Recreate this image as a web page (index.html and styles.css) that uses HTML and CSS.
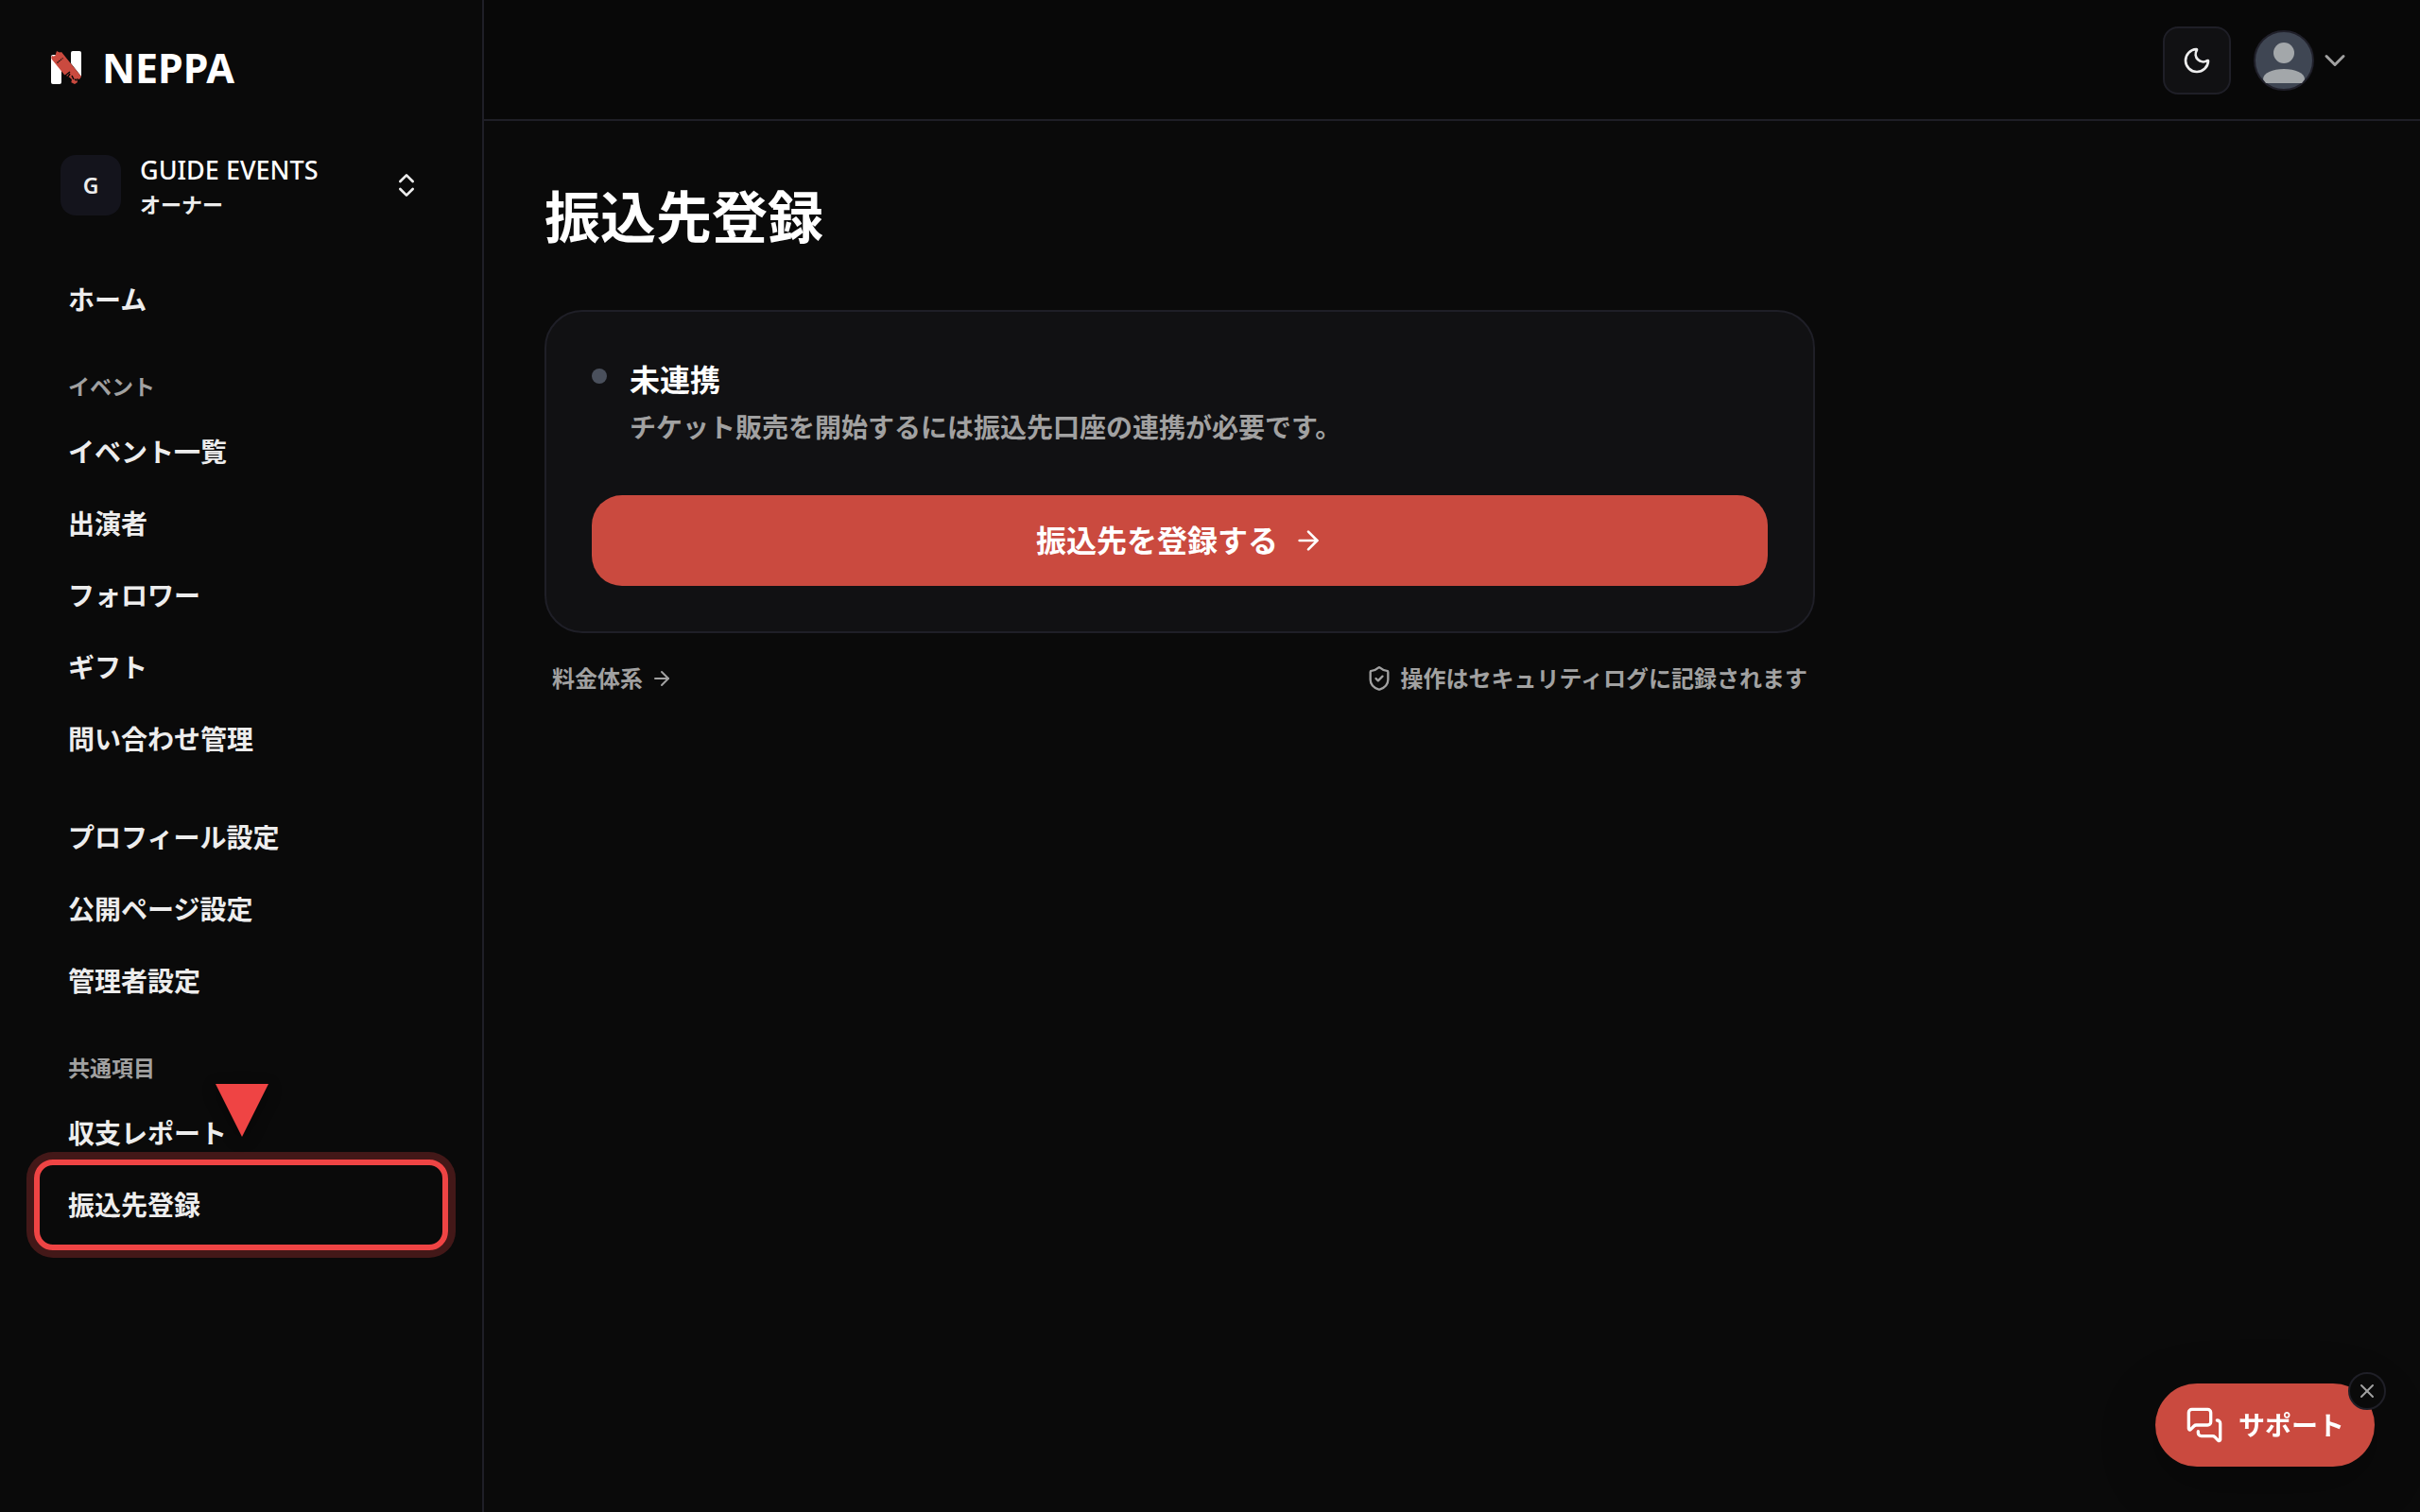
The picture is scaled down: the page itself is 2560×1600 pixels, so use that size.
FILE: index.html
```html
<!DOCTYPE html>
<html lang="ja">
<head>
<meta charset="utf-8">
<meta name="viewport" content="width=device-width, initial-scale=1">
<title>振込先登録 | NEPPA</title>
<link rel="stylesheet" href="styles.css">
</head>
<body>
<div class="app">
  <aside class="sidebar">
    <a class="brand" href="#">
      <svg class="brand-mark" viewBox="0 0 32 36" aria-hidden="true">
        <rect x="0" y="4" width="11" height="31" rx="2" fill="#fff"/>
        <path d="M21 2a2 2 0 0 1 2-2h7a2 2 0 0 1 2 2v25L21 13z" fill="#fff"/>
        <path d="M1 5c2 1 4 0 4-2l1-3c2 1 3 2 5 1l21 26-2 3-3-1 1 4-3 2-4-2 1-3-4-3-4-2L1 9C0 8 0 6 1 5z" fill="#ca4a3f"/>
        <path d="M6.500 12.500l6-5" stroke="#0a0a0a" stroke-width="1.200" stroke-dasharray="1.500 .8"/>
        <path d="M15 26l5-4M16 30l4-6M14 33l3-3M19 28l2 4M20 34l1-2M22 26l2 4M25 30l2 1M18 34l1 1" stroke="#0a0a0a" stroke-width="1.500" fill="none"/>
      </svg>
      <span class="brand-name">NEPPA</span>
    </a>

    <button class="switcher" type="button">
      <span class="switcher-badge">G</span>
      <span class="switcher-text">
        <span class="switcher-name">GUIDE EVENTS</span>
        <span class="switcher-role">オーナー</span>
      </span>
      <svg class="icon icon-32" viewBox="0 0 24 24" aria-hidden="true"><path d="m7 15 5 5 5-5"/><path d="m7 9 5-5 5 5"/></svg>
    </button>

    <nav class="nav">
      <ul class="nav-list">
        <li><a class="nav-link" href="#">ホーム</a></li>
      </ul>
      <h2 class="nav-label">イベント</h2>
      <ul class="nav-list">
        <li><a class="nav-link" href="#">イベント一覧</a></li>
        <li><a class="nav-link" href="#">出演者</a></li>
        <li><a class="nav-link" href="#">フォロワー</a></li>
        <li><a class="nav-link" href="#">ギフト</a></li>
        <li><a class="nav-link" href="#">問い合わせ管理</a></li>
      </ul>
      <ul class="nav-list nav-list-spaced">
        <li><a class="nav-link" href="#">プロフィール設定</a></li>
        <li><a class="nav-link" href="#">公開ページ設定</a></li>
        <li><a class="nav-link" href="#">管理者設定</a></li>
      </ul>
      <h2 class="nav-label">共通項目</h2>
      <ul class="nav-list">
        <li><a class="nav-link" href="#">収支レポート</a></li>
        <li class="guided">
          <a class="nav-link" href="#">振込先登録</a>
          <span class="guide-ring"></span>
          <svg class="guide-arrow" viewBox="0 0 56 56" aria-hidden="true"><path d="M0 0h56L28 56z" fill="#ef4444"/></svg>
        </li>
      </ul>
    </nav>
  </aside>

  <div class="main">
    <header class="topbar">
      <button class="theme-toggle" type="button" aria-label="テーマ切替">
        <svg class="icon icon-32" viewBox="0 0 24 24" aria-hidden="true"><path d="M20.985 12.486a9 9 0 1 1-9.473-9.472c.405-.022.617.46.402.803a6 6 0 0 0 8.268 8.268c.344-.215.825-.004.803.401"/></svg>
      </button>
      <button class="account" type="button" aria-label="アカウント">
        <svg class="avatar" viewBox="0 0 64 64" aria-hidden="true">
          <circle cx="32" cy="32" r="31" fill="#3f4653" stroke="#20202a" stroke-width="2"/>
          <circle cx="32" cy="24" r="11" fill="#a3a7aa"/>
          <path d="M10 52c0-7 10-11 22-11s22 4 22 11l-3 4H13z" fill="#a3a7aa"/>
        </svg>
        <svg class="icon icon-36 muted" viewBox="0 0 24 24" aria-hidden="true"><path d="m6 9 6 6 6-6"/></svg>
      </button>
    </header>

    <main class="content">
      <h1 class="page-title">振込先登録</h1>
      <section class="card">
        <div class="status">
          <span class="status-dot"></span>
          <div>
            <h2 class="status-title">未連携</h2>
            <p class="status-text">チケット販売を開始するには振込先口座の連携が必要です。</p>
          </div>
        </div>
        <button class="primary" type="button">
          振込先を登録する
          <svg class="icon icon-32" viewBox="0 0 24 24" aria-hidden="true"><path d="M5 12h14"/><path d="m12 5 7 7-7 7"/></svg>
        </button>
      </section>
      <div class="card-notes">
        <a class="note" href="#">
          料金体系
          <svg class="icon icon-24" viewBox="0 0 24 24" aria-hidden="true"><path d="M5 12h14"/><path d="m12 5 7 7-7 7"/></svg>
        </a>
        <p class="note">
          <svg class="icon icon-28" viewBox="0 0 24 24" aria-hidden="true"><path d="M20 13c0 5-3.500 7.500-7.660 8.950a1 1 0 0 1-.67-.01C7.500 20.500 4 18 4 13V6a1 1 0 0 1 1-1c2 0 4.500-1.200 6.240-2.720a1.170 1.170 0 0 1 1.520 0C14.510 3.810 17 5 19 5a1 1 0 0 1 1 1z"/><path d="m9 12 2 2 4-4"/></svg>
          操作はセキュリティログに記録されます
        </p>
      </div>
    </main>
  </div>
</div>

<div class="support">
  <button class="support-open" type="button">
    <svg class="icon icon-40" viewBox="0 0 24 24" aria-hidden="true"><path d="M16 10a2 2 0 0 1-2 2H6.828a2 2 0 0 0-1.414.586l-2.202 2.202A.71.71 0 0 1 2 14.286V4a2 2 0 0 1 2-2h10a2 2 0 0 1 2 2z"/><path d="M20 9a2 2 0 0 1 2 2v10.286a.71.71 0 0 1-1.212.502l-2.202-2.202A2 2 0 0 0 17.172 19H10a2 2 0 0 1-2-2v-1"/></svg>
    サポート
  </button>
  <button class="support-close" type="button" aria-label="閉じる">
    <svg class="icon icon-24" viewBox="0 0 24 24" aria-hidden="true"><path d="M18 6 6 18"/><path d="m6 6 12 12"/></svg>
  </button>
</div>
</body>
</html>
```
FILE: styles.css
```css
:root {
  --bg: #0a0a0a;
  --bg-deep: #080808;
  --surface: #111113;
  --line: #1f1f27;
  --text: #ededed;
  --muted: #a1a1a1;
  --accent: #ca4a3f;
  --guide: #ef4444;
}

* { box-sizing: border-box; }

body {
  margin: 0;
  background: var(--bg);
  color: var(--text);
  font-family: "Noto Sans", "Noto Sans CJK JP", sans-serif;
  font-size: 28px;
  line-height: 40px;
}

h1, h2, p, ul { margin: 0; padding: 0; }
ul { list-style: none; }
a { color: inherit; text-decoration: none; }
button {
  padding: 0;
  border: 0;
  background: none;
  color: inherit;
  font: inherit;
  text-align: left;
  cursor: pointer;
}

.icon {
  flex: none;
  fill: none;
  stroke: currentColor;
  stroke-width: 2;
  stroke-linecap: round;
  stroke-linejoin: round;
}
.icon-24 { width: 24px; height: 24px; }
.icon-28 { width: 28px; height: 28px; }
.icon-32 { width: 32px; height: 32px; }
.icon-36 { width: 36px; height: 36px; }
.icon-40 { width: 40px; height: 40px; }
.muted { color: var(--muted); }

.app {
  display: flex;
  min-height: 100vh;
}

/* Sidebar */
.sidebar {
  flex: none;
  width: 512px;
  padding: 40px 48px;
  border-right: 2px solid var(--line);
}
.brand {
  display: flex;
  align-items: center;
  gap: 22px;
  height: 64px;
  padding-left: 6px;
}
.brand-mark { width: 32px; height: 36px; }
.brand-name {
  color: #fff;
  font-size: 43px;
  font-weight: 700;
}
.switcher {
  display: flex;
  align-items: center;
  gap: 20px;
  width: 100%;
  margin-top: 56px;
  padding: 0 16px;
}
.switcher-badge {
  display: grid;
  place-items: center;
  width: 64px;
  height: 64px;
  border-radius: 16px;
  background: #14141c;
  font-size: 23px;
  font-weight: 600;
}
.switcher-text { flex: 1; }
.switcher-name,
.switcher-role { display: block; }
.switcher-name {
  color: #fff;
  font-size: 27px;
  font-weight: 500;
  line-height: 40px;
}
.switcher-role {
  font-size: 22px;
  font-weight: 600;
  line-height: 32px;
}

.nav { margin-top: 49px; }
.nav-list { display: grid; gap: 4px; }
.nav-list-spaced { margin-top: 32px; }
.nav-link {
  display: flex;
  align-items: center;
  height: 72px;
  padding: 0 24px;
  font-weight: 600;
}
.nav-label {
  margin: 40px 24px 17px;
  color: var(--muted);
  font-size: 23px;
  font-weight: 600;
  line-height: 32px;
}

/* Step marker laid over the menu entry */
.guided { position: relative; }
.guide-ring {
  position: absolute;
  inset: -12px;
  border: 6px solid var(--guide);
  border-radius: 20px;
  box-shadow: 0 0 0 8px rgba(239, 68, 68, 0.25);
  pointer-events: none;
}
.guide-arrow {
  position: absolute;
  bottom: 108px;
  left: 50%;
  width: 56px;
  height: 56px;
  margin-left: -27px;
  overflow: visible;
  filter: drop-shadow(0 4px 8px rgba(0, 0, 0, 0.4));
  pointer-events: none;
}

/* Main column */
.main {
  flex: 1;
  min-width: 0;
}
.topbar {
  display: flex;
  align-items: center;
  justify-content: flex-end;
  gap: 24px;
  padding: 28px 72px 26px;
  border-bottom: 2px solid var(--line);
  background: var(--bg-deep);
}
.theme-toggle {
  display: grid;
  place-items: center;
  width: 72px;
  height: 72px;
  border: 2px solid var(--line);
  border-radius: 16px;
  background: var(--surface);
}
.account {
  display: flex;
  align-items: center;
  gap: 4px;
}
.avatar { width: 64px; height: 64px; }

.content {
  max-width: 1472px;
  padding: 64px;
}
.page-title {
  color: #fff;
  font-size: 59px;
  font-weight: 700;
  line-height: 74px;
}
.card {
  margin-top: 62px;
  padding: 48px;
  border: 2px solid var(--line);
  border-radius: 40px;
  background: var(--surface);
}
.status {
  display: flex;
  gap: 24px;
}
.status-dot {
  flex: none;
  width: 16px;
  height: 16px;
  margin-top: 12px;
  border-radius: 50%;
  background: #4a505c;
}
.status-title {
  color: #fff;
  font-size: 32px;
  font-weight: 600;
  line-height: 48px;
}
.status-text {
  margin-top: 4px;
  color: var(--muted);
  font-weight: 600;
  line-height: 44px;
}
.primary {
  display: flex;
  align-items: center;
  justify-content: center;
  gap: 16px;
  width: 100%;
  height: 96px;
  margin-top: 50px;
  border-radius: 32px;
  background: var(--accent);
  color: #fff;
  font-size: 32px;
  font-weight: 600;
}
.card-notes {
  display: flex;
  justify-content: space-between;
  margin-top: 32px;
  padding: 0 8px;
}
.note {
  display: flex;
  align-items: center;
  gap: 8px;
  color: var(--muted);
  font-size: 24px;
  font-weight: 600;
  line-height: 32px;
}

/* Floating support button */
.support {
  position: fixed;
  right: 48px;
  bottom: 48px;
}
.support-open {
  display: flex;
  align-items: center;
  gap: 16px;
  height: 88px;
  padding: 0 32px;
  border-radius: 44px;
  background: var(--accent);
  box-shadow: 0 16px 60px rgba(0, 0, 0, 0.3);
  color: #fff;
  font-weight: 600;
}
.support-close {
  position: absolute;
  top: -12px;
  right: -12px;
  display: grid;
  place-items: center;
  width: 40px;
  height: 40px;
  border: 2px solid var(--line);
  border-radius: 50%;
  background: var(--bg);
  color: var(--muted);
}
```
